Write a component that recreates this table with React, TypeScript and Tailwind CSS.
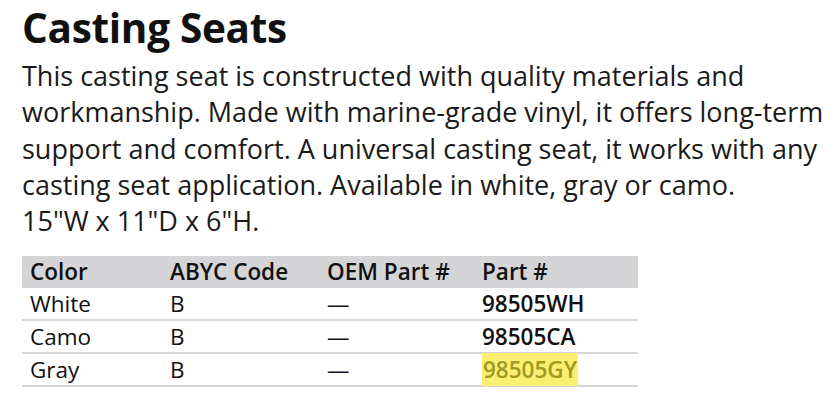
export default function App() {
  const rows = [
    { color: 'White', abyc: 'B', oem: '—', part: '98505WH' },
    { color: 'Camo', abyc: 'B', oem: '—', part: '98505CA' },
    { color: 'Gray', abyc: 'B', oem: '—', part: '98505GY', highlight: true },
  ];

  return (
    <div className="h-[420px] w-[837px] bg-white pl-[22px] pt-[2px] font-['Open_Sans',sans-serif] text-[#111]">
      <h1 className="text-[40.5px] font-bold leading-[52px] tracking-[-0.3px]">Casting Seats</h1>
      <p className="mt-[4px] w-[812px] text-[27px] leading-[36.3px] text-[#1a1a1a]">
        This casting seat is constructed with quality materials and workmanship. Made with marine-grade vinyl, it
        offers long-term support and comfort. A universal casting seat, it works with any casting seat application.
        Available in white, gray or camo.
        <br />
        15"W x 11"D x 6"H.
      </p>
      <table className="mt-[17px] w-[616px] border-collapse text-[22.5px]">
        <thead>
          <tr className="bg-[#d5d5d7] text-left leading-[32px]">
            <th className="w-[148px] pl-[8px] font-semibold">Color</th>
            <th className="w-[157px] font-semibold">ABYC Code</th>
            <th className="w-[155px] font-semibold">OEM Part #</th>
            <th className="font-semibold">Part #</th>
          </tr>
        </thead>
        <tbody>
          {rows.map((r) => (
            <tr key={r.part} className="border-b-2 border-[#d6d6d6] leading-[31px]">
              <td className="pl-[8px]">{r.color}</td>
              <td>{r.abyc}</td>
              <td>{r.oem}</td>
              <td className="font-semibold">
                {r.highlight ? (
                  <span className="bg-[#fbef72] px-[1px] py-[1px] text-[#a09a25]">{r.part}</span>
                ) : (
                  r.part
                )}
              </td>
            </tr>
          ))}
        </tbody>
      </table>
    </div>
  );
}
